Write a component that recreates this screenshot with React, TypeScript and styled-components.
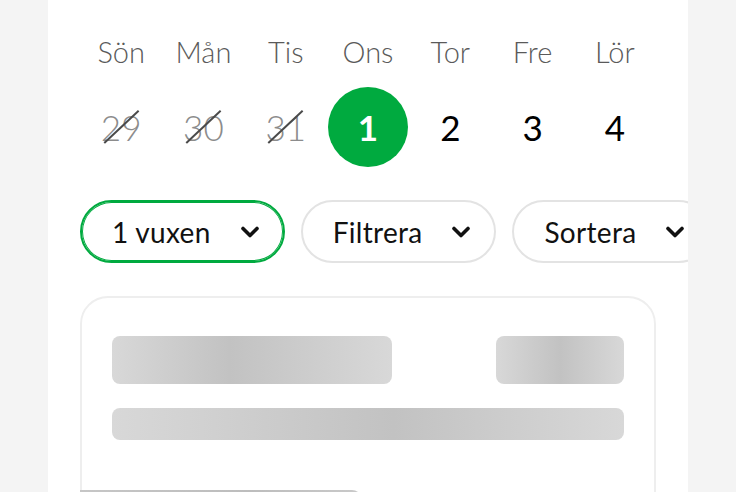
import React from "react";
import styled, { createGlobalStyle } from "styled-components";

const Global = createGlobalStyle`
  html, body { margin: 0; padding: 0; background: #f4f4f4; overflow: hidden; }
  body { font-family: "Lato", "Open Sans", sans-serif; }
  #root { height: 492px; }
`;

const Panel = styled.div`
  margin-left: 48px;
  width: 640px;
  height: 492px;
  box-sizing: border-box;
  background: #ffffff;
  padding: 28px 32px 0;
  overflow: hidden;
`;

const Week = styled.div`
  display: grid;
  grid-template-columns: repeat(7, 1fr);
  grid-template-rows: 48px 80px;
  row-gap: 11px;
  justify-items: center;
  align-items: center;
`;

const DayLabel = styled.div`
  font-size: 29px;
  font-weight: 300;
  line-height: 48px;
  color: #5a5a5a;
`;

const DayNum = styled.div<{ $state: "past" | "selected" | "future" }>`
  position: relative;
  width: 80px;
  height: 80px;
  border-radius: 50%;
  display: flex;
  align-items: center;
  justify-content: center;
  font-size: 35px;
  line-height: 1;
  color: ${(p) => (p.$state === "past" ? "#8c8c8c" : p.$state === "selected" ? "#ffffff" : "#000000")};
  background: ${(p) => (p.$state === "selected" ? "#00aa3f" : "transparent")};
  font-weight: ${(p) => (p.$state === "selected" ? 700 : p.$state === "past" ? 300 : 400)};
`;

const Struck = styled.span`
  position: relative;
  display: inline-block;
  &::after {
    content: "";
    position: absolute;
    left: -3px;
    right: -3px;
    top: 50%;
    height: 2px;
    margin-top: -1px;
    background: #4a4a4a;
    transform: rotate(-43deg);
  }
`;

const Chips = styled.div`
  display: flex;
  gap: 16px;
  margin-top: 33px;
  white-space: nowrap;
`;

const Chip = styled.button<{ $active?: boolean }>`
  flex-shrink: 0;
  display: flex;
  align-items: center;
  gap: 29px;
  height: 63px;
  box-sizing: border-box;
  padding: 0 23px 0 30px;
  border-radius: 32px;
  background: #ffffff;
  border: 2px solid ${(p) => (p.$active ? "#00aa3f" : "#e3e3e3")};
  box-shadow: ${(p) => (p.$active ? "inset 0 0 0 1px #00aa3f" : "none")};
  font-family: "Lato", "Open Sans", sans-serif;
  font-size: 28px;
  letter-spacing: 0.3px;
  color: #111111;
`;

const Card = styled.div`
  margin-top: 33px;
  border: 2px solid #eeeeee;
  border-radius: 28px;
  padding: 38px 30px 0;
  height: 300px;
  box-sizing: border-box;
`;

const SkelRow = styled.div`
  display: flex;
  justify-content: space-between;
`;

const Skel = styled.div<{ $w?: string; $h: number; $peak?: number }>`
  width: ${(p) => p.$w ?? "100%"};
  height: ${(p) => p.$h}px;
  border-radius: 8px;
  background: linear-gradient(
    90deg,
    #d8d8d8 0%,
    #c2c2c2 ${(p) => p.$peak ?? 45}%,
    #d8d8d8 100%
  );
`;

const SkelGap = styled.div`
  margin-top: 24px;
`;

const ImageSkel = styled.div`
  margin: 50px 0 0 -32px;
  width: 282px;
  height: 20px;
  border-radius: 0 10px 0 0;
  background: linear-gradient(90deg, #c6c6c6 0%, #bdbdbd 60%, #c9c9c9 100%);
`;

const Chevron = () => (
  <svg width="20" height="12" viewBox="0 0 20 12">
    <polyline
      points="3,2.5 10,9.5 17,2.5"
      fill="none"
      stroke="#111"
      strokeWidth="3.6"
      strokeLinecap="round"
      strokeLinejoin="round"
    />
  </svg>
);

const labels = ["Sön", "Mån", "Tis", "Ons", "Tor", "Fre", "Lör"];
const days: { n: string; s: "past" | "selected" | "future" }[] = [
  { n: "29", s: "past" },
  { n: "30", s: "past" },
  { n: "31", s: "past" },
  { n: "1", s: "selected" },
  { n: "2", s: "future" },
  { n: "3", s: "future" },
  { n: "4", s: "future" },
];

export default function App() {
  return (
    <>
      <Global />
      <Panel>
        <Week>
          {labels.map((l) => (
            <DayLabel key={l}>{l}</DayLabel>
          ))}
          {days.map((d) => (
            <DayNum key={d.n} $state={d.s}>
              {d.s === "past" ? <Struck>{d.n}</Struck> : d.n}
            </DayNum>
          ))}
        </Week>
        <Chips>
          <Chip $active>
            1 vuxen
            <Chevron />
          </Chip>
          <Chip>
            Filtrera
            <Chevron />
          </Chip>
          <Chip>
            Sortera
            <Chevron />
          </Chip>
        </Chips>
        <Card>
          <SkelRow>
            <Skel $w="280px" $h={48} $peak={42} />
            <Skel $w="128px" $h={48} $peak={50} />
          </SkelRow>
          <SkelGap>
            <Skel $h={32} $peak={55} />
          </SkelGap>
          <ImageSkel />
        </Card>
      </Panel>
    </>
  );
}
